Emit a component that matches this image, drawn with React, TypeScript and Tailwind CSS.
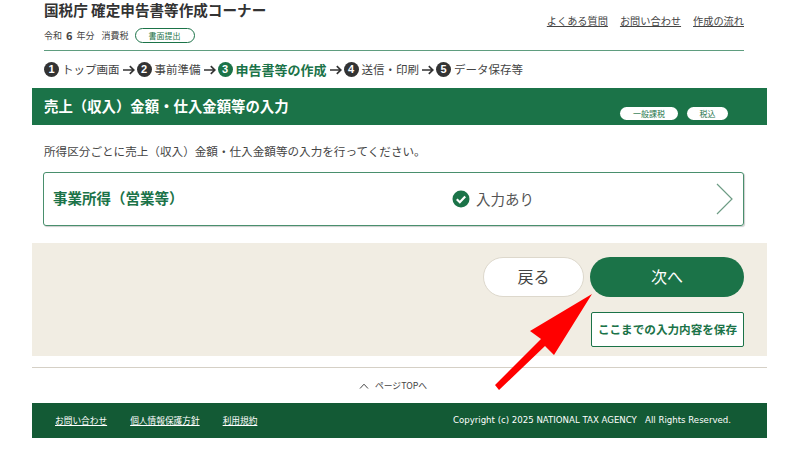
const JP = "font-['Meiryo','Noto_Sans_CJK_JP','Noto_Sans',sans-serif]";

const STEPS = [
  { no: "1", label: "トップ画面" },
  { no: "2", label: "事前準備" },
  { no: "3", label: "申告書等の作成", active: true },
  { no: "4", label: "送信・印刷" },
  { no: "5", label: "データ保存等" },
];

function StepArrow() {
  return (
    <svg width="12" height="10" viewBox="0 0 12 10" className="ml-[3px] mr-[2px] shrink-0">
      <path d="M0 5h10.500M6.800 1.200 10.800 5 6.800 8.800" fill="none" stroke="#333" strokeWidth="1.700" />
    </svg>
  );
}

function StepBall({ no, active }: { no: string; active?: boolean }) {
  return (
    <span
      className={`flex h-[15px] w-[15px] shrink-0 items-center justify-center rounded-full text-[11px] font-bold leading-none text-white font-['Liberation_Sans',sans-serif] ${active ? "bg-[#1b7348]" : "bg-[#333333]"}`}
    >
      {no}
    </span>
  );
}

export default function App() {
  return (
    <div className={`relative h-[450px] w-[800px] overflow-hidden bg-white text-[#444] ${JP}`}>
      <div className="ml-[32px] w-[735px]">
        {/* header */}
        <div className="pl-[12px] pr-[23px]">
          <div className="flex h-[51px] justify-between border-b border-[#1b7348]/70">
            <div>
              <div className="text-[14.600px] font-bold leading-[20px] text-[#333]">国税庁 確定申告書等作成コーナー</div>
              <div className="mt-[8px] flex items-center text-[9px] leading-[15px] text-[#444]">
                <span>令和</span>
                <span className="mx-[4px] text-[11px] font-bold">6</span>
                <span>年分</span>
                <span className="ml-[7px]">消費税</span>
                <span className="ml-[6px] flex h-[15px] w-[60px] items-center justify-center rounded-full border border-[#1b7348] text-[8px] text-[#1b7348]">
                  書面提出
                </span>
              </div>
            </div>
            <div className="flex gap-[12px] pt-[14px] text-[10.200px] leading-[14px] text-[#444] underline">
              <span>よくある質問</span>
              <span>お問い合わせ</span>
              <span>作成の流れ</span>
            </div>
          </div>
          <div className="flex h-[37px] items-center text-[11.500px]">
            {STEPS.map((s, i) => (
              <div key={s.no} className="flex items-center">
                {i > 0 && <StepArrow />}
                <StepBall no={s.no} active={s.active} />
                <span className={s.active ? "ml-[3px] text-[13px] font-bold text-[#1b7348]" : "ml-[3px] text-[#444]"}>{s.label}</span>
              </div>
            ))}
          </div>
        </div>

        {/* title bar */}
        <div className="flex h-[37px] items-center justify-between bg-[#1b7348] pl-[12px] pr-[39px]">
          <div className="pb-[2px] text-[14.400px] font-bold text-white">売上（収入）金額・仕入金額等の入力</div>
          <div className="mt-[13px] flex gap-[9px] text-[8px] leading-[13px] text-[#1b7348]">
            <span className="flex h-[13px] w-[58px] items-center justify-center rounded-full bg-white">一般課税</span>
            <span className="flex h-[13px] w-[41px] items-center justify-center rounded-full bg-white">税込</span>
          </div>
        </div>

        <p className="mt-[17px] px-[12px] text-[11.600px] leading-[18px] text-[#444]">
          所得区分ごとに売上（収入）金額・仕入金額等の入力を行ってください。
        </p>

        {/* income row */}
        <div className="ml-[11px] mr-[23px] mt-[12px] flex h-[54px] items-center rounded-[3px] border border-[#1b7348]/80 pl-[9px] pr-[9px] shadow-[1px_1px_1px_rgba(0,0,0,0.2)]">
          <div className="w-[399px] pb-[3px] text-[14.500px] font-bold text-[#1b7348]">事業所得（営業等）</div>
          <svg width="18" height="18" viewBox="0 0 18 18" className="shrink-0">
            <circle cx="9" cy="9" r="8.500" fill="#1b7348" />
            <path d="M4.800 9.300 7.800 12.200 13.200 6.400" fill="none" stroke="#fff" strokeWidth="2.200" />
          </svg>
          <span className="ml-[6px] text-[14.500px] text-[#555]">入力あり</span>
          <svg width="18" height="32" viewBox="0 0 18 32" className="ml-auto shrink-0">
            <path d="M1 1 16 16 1 31" fill="none" stroke="#6d9c85" strokeWidth="1.200" />
          </svg>
        </div>

        {/* actions */}
        <div className="mt-[17px] flex h-[113px] flex-col items-end bg-[#f1ede3] pr-[23px] pt-[14px]">
          <div className="flex gap-[6px]">
            <button className="h-[40px] w-[101px] rounded-full border border-[#ddd8cc] bg-white pb-[2px] text-[16px] text-[#444]">戻る</button>
            <button className="h-[40px] w-[154px] rounded-full bg-[#1b7348] pb-[2px] text-[16px] text-white">次へ</button>
          </div>
          <button className="mt-[15px] h-[35px] w-[153px] rounded-[2px] border border-[#1b7348] bg-white text-[11.600px] font-bold text-[#1b7348]">
            ここまでの入力内容を保存
          </button>
        </div>

        {/* page top */}
        <div className="mt-[11px] flex h-[36px] items-center justify-center border-t border-[#d5d0c6] pr-[13px] text-[8.800px] text-[#444]">
          <svg width="10" height="6" viewBox="0 0 10 6" className="mr-[6px]">
            <path d="M1 5.500 5 1.200 9 5.500" fill="none" stroke="#444" strokeWidth="1" />
          </svg>
          ページTOPへ
        </div>

        {/* footer */}
        <div className="flex h-[35px] items-center justify-between bg-[#135a35] pl-[23px] pr-[36px] text-[8.700px] text-white">
          <div className="flex gap-[23px] underline">
            <span>お問い合わせ</span>
            <span>個人情報保護方針</span>
            <span>利用規約</span>
          </div>
          <span className="whitespace-pre font-['DejaVu_Sans',sans-serif] text-[8.600px]">Copyright (c) 2025 NATIONAL TAX AGENCY   All Rights Reserved.</span>
        </div>
      </div>

      {/* red annotation arrow */}
      <svg width="120" height="120" viewBox="0 0 120 120" className="absolute left-[485px] top-[285px]">
        <path d="M107 9 69 70 60 61 14 105 10 100 56 54 45 46Z" fill="#ff0000" />
      </svg>
    </div>
  );
}
